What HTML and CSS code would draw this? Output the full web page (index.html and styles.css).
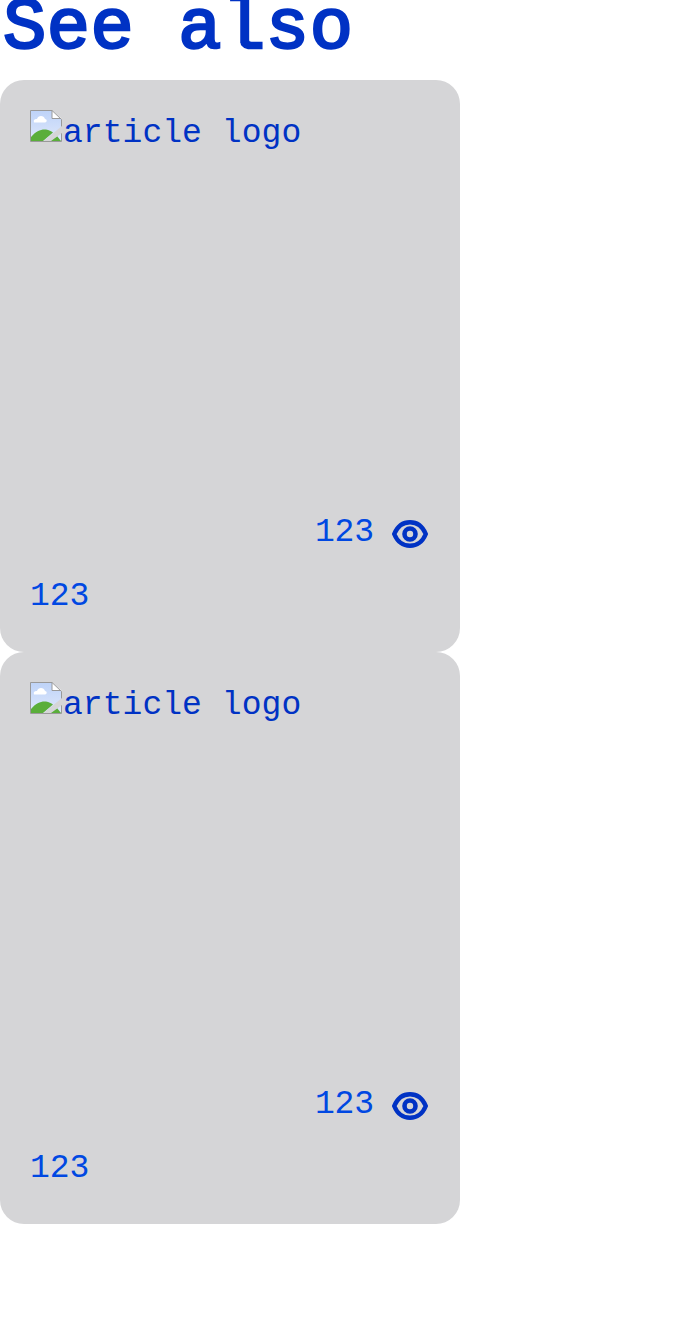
FILE: index.html
```html
<!DOCTYPE html>
<html lang="en">
<head>
<meta charset="utf-8">
<title>See also</title>
<link rel="stylesheet" href="styles.css">
</head>
<body>
<svg class="defs" aria-hidden="true">
  <linearGradient id="sky" x1="0" y1="0" x2="0" y2="1"><stop offset="0" stop-color="#bed3f8"/><stop offset="1" stop-color="#dfe8fb"/></linearGradient>
  <symbol id="broken" viewBox="0 0 32 32">
    <path d="M.5.5H22L31.500 9.500V31.500H.5Z" fill="url(#sky)"/>
    <path d="M4 12.500C3 10 5 8.500 7 9C8 5 14 5 15 9C17 9 17.500 12 15 12.500Z" fill="#fff"/>
    <path d="M1 31V27C6 21 11 19 16 19.500C19 20 21 21 23 22.500L13 31ZM20 31L27 26L31 31Z" fill="#5aae3a"/>
    <path d="M22 .5V8.500H31.500Z" fill="#fff"/>
    <path d="M.5.5H22L31.500 9.500V31.500H.5ZM22 .5V8.500H31" fill="none" stroke="#999"/>
    <path d="M13.500 31L32 16V23L21 31Z" fill="#d5d5d7"/>
  </symbol>
  <symbol id="eye" viewBox="0 0 36 28">
    <path d="M2.200 14C5.500 6 11 2.200 18 2.200S30.500 6 33.800 14C30.500 22 25 25.800 18 25.800S5.500 22 2.200 14Z" fill="none" stroke="#0032c4" stroke-width="4.400" stroke-linejoin="round"/>
    <circle cx="18" cy="14" r="5.500" fill="none" stroke="#0032c4" stroke-width="4.600"/>
  </symbol>
</svg>
<h1 class="title">See also</h1>
<main class="list">
  <article class="card">
    <div class="logo"><svg class="broken"><use href="#broken"/></svg><span>article logo</span></div>
    <div class="views"><span class="count">123</span><svg class="eye"><use href="#eye"/></svg></div>
    <p class="text">123</p>
  </article>
  <article class="card">
    <div class="logo"><svg class="broken"><use href="#broken"/></svg><span>article logo</span></div>
    <div class="views"><span class="count">123</span><svg class="eye"><use href="#eye"/></svg></div>
    <p class="text">123</p>
  </article>
</main>
</body>
</html>
```
FILE: styles.css
```css
* { box-sizing: border-box; }
body { margin: 0; background: #fff; font-family: "Liberation Mono", monospace; font-size: 33px; line-height: 48px; color: #0032c4; overflow: hidden; }
.defs { display: block; width: 0; height: 0; }
.title { margin: 0; padding-left: 3px; height: 80px; font-size: 72px; font-weight: 400; line-height: 58px; letter-spacing: .6px; -webkit-text-stroke: 2.600px #0032c4; white-space: pre; }
.card { display: flex; flex-direction: column; width: 460px; height: 572px; padding: 30px; border-radius: 24px; background: #d5d5d7; letter-spacing: -0.100px; }
.logo { display: flex; height: 400px; gap: 1px; line-height: 48px; letter-spacing: .05px; }
.broken { width: 32px; height: 32px; }
.views { display: flex; justify-content: flex-end; align-items: center; height: 48px; color: #0048e2; }
.count { padding-bottom: 2px; }
.eye { width: 36px; height: 28px; margin: 0 2px 0 18px; }
.text { margin: 15px 0 0; color: #0048e2; }
```
